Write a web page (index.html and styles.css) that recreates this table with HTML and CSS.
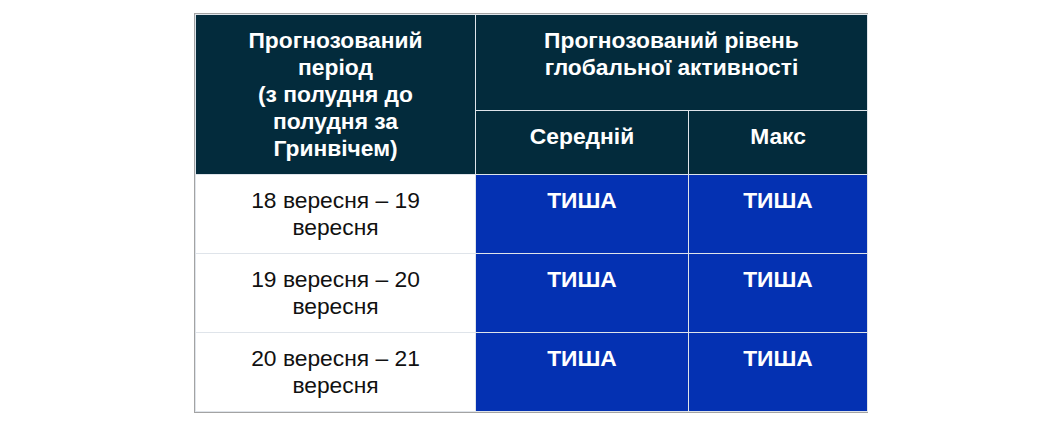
FILE: index.html
```html
<!DOCTYPE html>
<html lang="uk">
<head>
<meta charset="utf-8">
<link rel="stylesheet" href="styles.css">
</head>
<body>
<div class="wrap">
<div class="frame">
<table class="forecast">
  <colgroup>
    <col class="c1">
    <col class="c2">
    <col class="c3">
  </colgroup>
  <thead>
    <tr class="h1">
      <th rowspan="2">Прогнозований<br>період<br>(з полудня до<br>полудня за<br>Гринвічем)</th>
      <th colspan="2">Прогнозований рівень<br>глобальної активності</th>
    </tr>
    <tr class="h2">
      <th>Середній</th>
      <th>Макс</th>
    </tr>
  </thead>
  <tbody>
    <tr>
      <td class="date">18 вересня – 19<br>вересня</td>
      <td class="level">ТИША</td>
      <td class="level">ТИША</td>
    </tr>
    <tr>
      <td class="date">19 вересня – 20<br>вересня</td>
      <td class="level">ТИША</td>
      <td class="level">ТИША</td>
    </tr>
    <tr>
      <td class="date">20 вересня – 21<br>вересня</td>
      <td class="level">ТИША</td>
      <td class="level">ТИША</td>
    </tr>
  </tbody>
</table>
</div>
</div>
</body>
</html>
```
FILE: styles.css
```css
html, body {
  margin: 0;
  padding: 0;
  background: #ffffff;
}
.wrap {
  padding: 13px 0 0 194px;
}
.frame {
  width: 672px;
  border: 1px solid #a3a3a3;
}
.forecast {
  border-collapse: collapse;
  table-layout: fixed;
  width: 672px;
  font-family: "Liberation Sans", Arial, sans-serif;
  font-size: 22.8px;
  line-height: 27px;
  text-align: center;
}
.c1 { width: 280px; }
.c2 { width: 213px; }
.c3 { width: 179px; }
.forecast th,
.forecast td {
  border: 1px solid #dfe4ea;
  vertical-align: top;
  padding: 12px 2px 0 2px;
  box-sizing: border-box;
}
.forecast th {
  background: #032b3c;
  color: #ffffff;
  font-weight: bold;
}
.h1 th { height: 96px; }
.h2 th { height: 64px; padding-top: 12px; }
.forecast tbody td { height: 79px; }
.date {
  background: #ffffff;
  color: #111111;
}
.level {
  background: #0431b2;
  color: #ffffff;
  font-weight: bold;
}
```
